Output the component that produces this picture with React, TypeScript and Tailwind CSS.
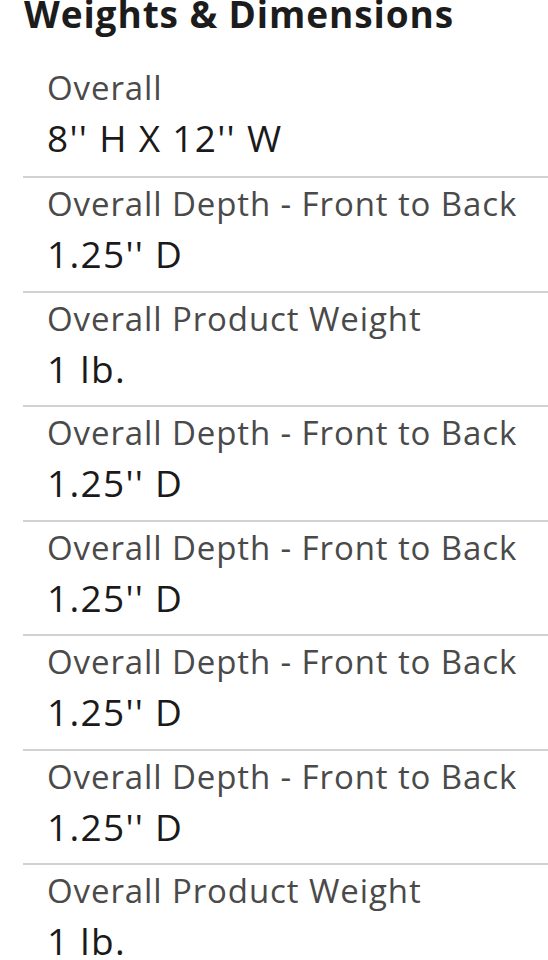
const rows = [
  { label: "Overall", value: "8'' H X 12'' W" },
  { label: "Overall Depth - Front to Back", value: "1.25'' D" },
  { label: "Overall Product Weight", value: "1 lb." },
  { label: "Overall Depth - Front to Back", value: "1.25'' D" },
  { label: "Overall Depth - Front to Back", value: "1.25'' D" },
  { label: "Overall Depth - Front to Back", value: "1.25'' D" },
  { label: "Overall Depth - Front to Back", value: "1.25'' D" },
  { label: "Overall Product Weight", value: "1 lb." },
];

export default function App() {
  return (
    <div className="w-[548px] h-[960px] overflow-hidden bg-white font-['Open_Sans',sans-serif]">
      <div className="h-[61.5px] pl-[24px] flex flex-col">
        <h1 className="mt-[-6px] text-[37px] leading-[40px] font-bold text-[#1c1c1c] tracking-[0.9px] whitespace-nowrap">
          Weights &amp; Dimensions
        </h1>
      </div>
      <div className="ml-[23px]">
        {rows.map((r, i) => (
          <div
            key={i}
            className={
              "pl-[24px] h-[114.5px] pt-[6px] " +
              (i > 0 ? "border-t-2 border-[#d2d2d2]" : "")
            }
          >
            <div className="text-[33px] leading-[40px] text-[#4a4a4a] tracking-[0.9px] whitespace-nowrap">
              {r.label}
            </div>
            <div className="mt-[5px] text-[37px] leading-[50px] text-[#1a1a1a] tracking-[1.3px] whitespace-nowrap">
              {r.value}
            </div>
          </div>
        ))}
      </div>
    </div>
  );
}
